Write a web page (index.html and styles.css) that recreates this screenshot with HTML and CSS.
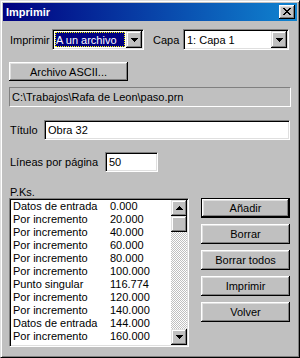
FILE: index.html
```html
<!DOCTYPE html>
<html lang="es">
<head>
    <meta charset="UTF-8">
    <title>Imprimir</title>
    <link rel="stylesheet" href="styles.css">
</head>
<body>
<div class="window">
    <div class="titlebar">
        <span class="title">Imprimir</span>
        <span class="close">
            <svg width="8" height="7" viewBox="0 0 8 7" shape-rendering="crispEdges">
                <path d="M0 0h2v1h-2zM6 0h2v1h-2zM1 1h2v1h-2zM5 1h2v1h-2zM2 2h4v1h-4zM3 3h2v1h-2zM2 4h4v1h-4zM1 5h2v1h-2zM5 5h2v1h-2zM0 6h2v1h-2zM6 6h2v1h-2z" fill="#000"/>
            </svg>
        </span>
    </div>

    <div class="client">
        <div class="top-row">
            <span class="lbl lbl-print">Imprimir</span>
            <div class="combo combo-print">
                <span class="combo-value focused">A un archivo</span>
                <span class="drop">
                    <svg width="7" height="4" viewBox="0 0 7 4" shape-rendering="crispEdges"><path d="M0 0h7v1h-7zM1 1h5v1h-5zM2 2h3v1h-3zM3 3h1v1h-1z" fill="#000"/></svg>
                </span>
            </div>
            <span class="lbl lbl-capa">Capa</span>
            <div class="combo combo-layer">
                <span class="combo-value">1: Capa 1</span>
                <span class="drop">
                    <svg width="7" height="4" viewBox="0 0 7 4" shape-rendering="crispEdges"><path d="M0 0h7v1h-7zM1 1h5v1h-5zM2 2h3v1h-3zM3 3h1v1h-1z" fill="#000"/></svg>
                </span>
            </div>
        </div>

        <div class="btn btn-ascii">Archivo ASCII...</div>

        <div class="path">C:\Trabajos\Rafa de Leon\paso.prn</div>

        <div class="field-row row-title">
            <span class="lbl lbl-title">Título</span>
            <div class="field field-title">Obra 32</div>
        </div>

        <div class="field-row row-lines">
            <span class="lbl lbl-lines">Líneas por página</span>
            <div class="field field-lines">50</div>
        </div>

        <div class="lbl lbl-pks">P.Ks.</div>

        <div class="list-area">
            <div class="listbox">
                <div class="list-items">
                    <div class="item"><span class="kind">Datos de entrada</span><span>0.000</span></div>
                    <div class="item"><span class="kind">Por incremento</span><span>20.000</span></div>
                    <div class="item"><span class="kind">Por incremento</span><span>40.000</span></div>
                    <div class="item"><span class="kind">Por incremento</span><span>60.000</span></div>
                    <div class="item"><span class="kind">Por incremento</span><span>80.000</span></div>
                    <div class="item"><span class="kind">Por incremento</span><span>100.000</span></div>
                    <div class="item"><span class="kind">Punto singular</span><span>116.774</span></div>
                    <div class="item"><span class="kind">Por incremento</span><span>120.000</span></div>
                    <div class="item"><span class="kind">Por incremento</span><span>140.000</span></div>
                    <div class="item"><span class="kind">Datos de entrada</span><span>144.000</span></div>
                    <div class="item"><span class="kind">Por incremento</span><span>160.000</span></div>
                    <div class="item"><span class="kind">Por incremento</span><span>171.000</span></div>
                </div>
                <div class="scrollbar">
                    <span class="sb-btn">
                        <svg width="7" height="4" viewBox="0 0 7 4" shape-rendering="crispEdges"><path d="M3 0h1v1h-1zM2 1h3v1h-3zM1 2h5v1h-5zM0 3h7v1h-7z" fill="#000"/></svg>
                    </span>
                    <span class="sb-thumb"></span>
                    <span class="sb-track"></span>
                    <span class="sb-btn">
                        <svg width="7" height="4" viewBox="0 0 7 4" shape-rendering="crispEdges"><path d="M0 0h7v1h-7zM1 1h5v1h-5zM2 2h3v1h-3zM3 3h1v1h-1z" fill="#000"/></svg>
                    </span>
                </div>
            </div>

            <div class="actions">
                <div class="btn btn-default">Añadir</div>
                <div class="btn">Borrar</div>
                <div class="btn">Borrar todos</div>
                <div class="btn">Imprimir</div>
                <div class="btn">Volver</div>
            </div>
        </div>
    </div>
</div>
</body>
</html>
```

FILE: styles.css
```css
body {
    margin: 0;
    font-family: "Liberation Sans", Arial, sans-serif;
    font-size: 11px;
    color: #000;
}
.window {
    width: 300px;
    height: 358px;
    box-sizing: border-box;
    background-color: #c0c0c0;
    border: 1px solid;
    border-color: #dfdfdf #000 #000 #dfdfdf;
    box-shadow: inset 1px 1px #fff, inset -1px -1px #808080;
    padding: 2px;
}
.titlebar {
    height: 18px;
    display: flex;
    align-items: center;
    justify-content: space-between;
    padding: 0 2px 0 3px;
    background: linear-gradient(90deg, #000080, #1084d0);
}
.title {
    color: #fff;
    font-weight: bold;
    font-size: 11px;
}
.close {
    width: 16px;
    height: 14px;
    box-sizing: border-box;
    display: flex;
    align-items: center;
    justify-content: center;
    background-color: #c0c0c0;
    box-shadow: inset -1px -1px #000, inset 1px 1px #fff, inset -2px -2px #808080, inset 2px 2px #dfdfdf;
    padding: 0 1px 1px 0;
}
.client {
    padding: 0 7px 0 6px;
}
.lbl {
    white-space: nowrap;
}
.top-row {
    display: flex;
    align-items: center;
    margin-top: 8px;
    height: 21px;
}
.lbl-print {
    width: 42px;
    padding-left: 1px;
}
.lbl-capa {
    width: 30px;
    margin-left: 9px;
}
.combo {
    height: 21px;
    box-sizing: border-box;
    display: flex;
    align-items: stretch;
    background-color: #fff;
    border: 1px solid;
    border-color: #808080 #fff #fff #808080;
    box-shadow: inset 1px 1px #000, inset -1px -1px #dfdfdf;
    padding: 1px;
}
.combo-print {
    width: 92px;
}
.combo-layer {
    width: 106px;
}
.combo-value {
    flex: 1;
    display: flex;
    align-items: center;
    margin: 1px;
    padding-left: 1px;
    white-space: nowrap;
    overflow: hidden;
}
.combo-value.focused {
    background-color: #000080;
    color: #fff;
    border: 1px dotted #ffff00;
    padding-left: 0;
}
.drop {
    width: 16px;
    display: flex;
    align-items: center;
    justify-content: center;
    background-color: #c0c0c0;
    box-shadow: inset -1px -1px #000, inset 1px 1px #dfdfdf, inset -2px -2px #808080, inset 2px 2px #fff;
}
.btn {
    height: 20px;
    box-sizing: border-box;
    display: flex;
    align-items: center;
    justify-content: center;
    background-color: #c0c0c0;
    box-shadow: inset -1px -1px #000, inset 1px 1px #fff, inset -2px -2px #808080, inset 2px 2px #dfdfdf;
    white-space: nowrap;
}
.btn-ascii {
    width: 119px;
    height: 19px;
    margin-top: 12px;
}
.btn-default {
    box-shadow: inset 0 0 0 1px #000, inset -2px -2px #000, inset 2px 2px #fff, inset -3px -3px #808080, inset 3px 3px #dfdfdf;
}
.path {
    width: 282px;
    height: 20px;
    box-sizing: border-box;
    margin-top: 6px;
    display: flex;
    align-items: center;
    padding-left: 2px;
    border: 1px solid;
    border-color: #808080 #fff #fff #808080;
}
.field-row {
    display: flex;
    align-items: center;
    height: 20px;
}
.row-title {
    margin-top: 13px;
}
.row-lines {
    margin-top: 12px;
}
.lbl-title {
    width: 34px;
    padding-left: 1px;
}
.lbl-lines {
    width: 95px;
    padding-left: 1px;
}
.field {
    height: 20px;
    box-sizing: border-box;
    display: flex;
    align-items: center;
    padding-left: 3px;
    background-color: #fff;
    border: 1px solid;
    border-color: #808080 #fff #fff #808080;
    box-shadow: inset 1px 1px #000, inset -1px -1px #dfdfdf;
}
.field-title {
    width: 246px;
}
.field-lines {
    width: 53px;
}
.lbl-pks {
    margin-top: 14px;
    height: 12px;
    line-height: 12px;
    padding-left: 1px;
}
.list-area {
    display: flex;
    align-items: flex-start;
}
.listbox {
    width: 180px;
    height: 149px;
    box-sizing: border-box;
    display: flex;
    background-color: #fff;
    border: 1px solid;
    border-color: #808080 #fff #fff #808080;
    box-shadow: inset 1px 1px #000, inset -1px -1px #dfdfdf;
    padding: 1px;
}
.list-items {
    flex: 1;
    overflow: hidden;
}
.item {
    display: flex;
    height: 13px;
    line-height: 13px;
    padding-left: 2px;
    white-space: nowrap;
}
.kind {
    width: 97px;
}
.scrollbar {
    width: 16px;
    display: flex;
    flex-direction: column;
}
.sb-btn, .sb-thumb {
    height: 16px;
    flex: none;
    display: flex;
    align-items: center;
    justify-content: center;
    background-color: #c0c0c0;
    box-shadow: inset -1px -1px #000, inset 1px 1px #dfdfdf, inset -2px -2px #808080, inset 2px 2px #fff;
}
.sb-track {
    flex: 1;
    background: repeating-conic-gradient(#c0c0c0 0 25%, #fff 0 50%) 0 0 / 2px 2px;
}
.actions {
    margin-left: 12px;
    width: 89px;
    display: flex;
    flex-direction: column;
    gap: 6px;
}
```
